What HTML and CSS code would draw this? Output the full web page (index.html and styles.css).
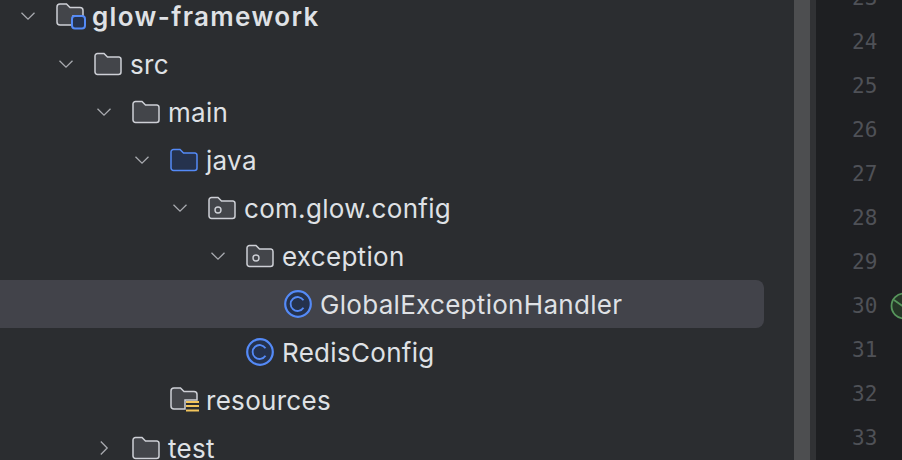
FILE: index.html
```html
<!DOCTYPE html>
<html lang="en">
<head>
  <meta charset="UTF-8">
  <title>glow-framework</title>
  <link rel="stylesheet" href="styles.css">
</head>
<body>
  <svg class="defs" width="0" height="0">
    <symbol id="chevron-down" viewBox="0 0 16 16"><path d="M1.500 4.800 8 11.200l6.500-6.400" fill="none" stroke="#a9abb0" stroke-width="1.300"/></symbol>
    <symbol id="chevron-right" viewBox="0 0 16 16"><path d="M4.800 1.500 11.200 8l-6.400 6.500" fill="none" stroke="#a9abb0" stroke-width="1.300"/></symbol>
    <symbol id="folder" viewBox="0 0 28 24"><path d="M1 4a2.500 2.500 0 0 1 2.500-2.500h6.500l3.500 3.500h11.500A2.500 2.500 0 0 1 27 7.500V20a2.500 2.500 0 0 1-2.500 2.500h-21A2.500 2.500 0 0 1 1 20z" fill="#43454a" stroke="#ced0d6" stroke-width="1.500"/></symbol>
    <symbol id="package" viewBox="0 0 28 24"><path d="M1 4a2.500 2.500 0 0 1 2.500-2.500h6.500l3.500 3.500h11.500A2.500 2.500 0 0 1 27 7.500V20a2.500 2.500 0 0 1-2.500 2.500h-21A2.500 2.500 0 0 1 1 20z" fill="#43454a" stroke="#ced0d6" stroke-width="1.500"/><circle cx="10" cy="14" r="3" fill="none" stroke="#ced0d6" stroke-width="1.400"/></symbol>
    <symbol id="class" viewBox="0 0 28 28"><circle cx="14" cy="14" r="12.800" fill="#25324d" stroke="#548af7" stroke-width="2.200"/><path d="M19.500 10.200A7 7 0 1 0 19.500 17.800" fill="none" stroke="#548af7" stroke-width="1.800"/></symbol>
  </svg>

  <div class="window">
    <div class="tree">
      <div class="row level-0">
        <svg class="chevron"><use href="#chevron-down"/></svg>
        <svg class="icon wide" viewBox="0 0 30 28">
          <path d="M1 5a3 3 0 0 1 3-3h6.500l3.500 3.500h10a3 3 0 0 1 3 3V14H17v9H4a3 3 0 0 1-3-3z" fill="#43454a" stroke="#ced0d6" stroke-width="1.500"/>
          <rect x="16" y="14" width="13" height="12.500" rx="3" fill="#25324d" stroke="#548af7" stroke-width="2"/>
        </svg>
        <span class="label bold">glow-framework</span>
      </div>
      <div class="row level-1">
        <svg class="chevron"><use href="#chevron-down"/></svg>
        <svg class="icon"><use href="#folder"/></svg>
        <span class="label">src</span>
      </div>
      <div class="row level-2">
        <svg class="chevron"><use href="#chevron-down"/></svg>
        <svg class="icon"><use href="#folder"/></svg>
        <span class="label">main</span>
      </div>
      <div class="row level-3">
        <svg class="chevron"><use href="#chevron-down"/></svg>
        <svg class="icon" viewBox="0 0 28 24"><path d="M1 4a2.500 2.500 0 0 1 2.500-2.500h6.500l3.500 3.500h11.500A2.500 2.500 0 0 1 27 7.500V20a2.500 2.500 0 0 1-2.500 2.500h-21A2.500 2.500 0 0 1 1 20z" fill="#25324d" stroke="#548af7" stroke-width="1.500"/></svg>
        <span class="label">java</span>
      </div>
      <div class="row level-4">
        <svg class="chevron"><use href="#chevron-down"/></svg>
        <svg class="icon"><use href="#package"/></svg>
        <span class="label">com.glow.config</span>
      </div>
      <div class="row level-5">
        <svg class="chevron"><use href="#chevron-down"/></svg>
        <svg class="icon"><use href="#package"/></svg>
        <span class="label">exception</span>
      </div>
      <div class="row level-6 selected">
        <span class="chevron"></span>
        <svg class="icon round"><use href="#class"/></svg>
        <span class="label">GlobalExceptionHandler</span>
      </div>
      <div class="row level-5">
        <span class="chevron"></span>
        <svg class="icon round"><use href="#class"/></svg>
        <span class="label">RedisConfig</span>
      </div>
      <div class="row level-3">
        <span class="chevron"></span>
        <svg class="icon wide" viewBox="0 0 30 28">
          <path d="M1 5a3 3 0 0 1 3-3h6.500l3.500 3.500h10a3 3 0 0 1 3 3V14H15v9H4a3 3 0 0 1-3-3z" fill="#43454a" stroke="#ced0d6" stroke-width="1.500"/>
          <path d="M16 16h13M16 20h13M16 24.500h13" stroke="#f2c55c" stroke-width="2.200"/>
        </svg>
        <span class="label">resources</span>
      </div>
      <div class="row level-2">
        <svg class="chevron"><use href="#chevron-right"/></svg>
        <svg class="icon"><use href="#folder"/></svg>
        <span class="label">test</span>
      </div>
    </div>

    <div class="scrollbar"></div>
    <div class="divider"></div>

    <div class="gutter">
      <div class="line">23</div>
      <div class="line">24</div>
      <div class="line">25</div>
      <div class="line">26</div>
      <div class="line">27</div>
      <div class="line">28</div>
      <div class="line">29</div>
      <div class="line">
        30
        <svg class="run" viewBox="0 0 28 28">
          <circle cx="14" cy="14" r="12.500" fill="#253627" stroke="#57965c" stroke-width="1.800"/>
          <path d="M4 8l10 7 9-7" fill="none" stroke="#57965c" stroke-width="1.800"/>
        </svg>
      </div>
      <div class="line">31</div>
      <div class="line">32</div>
      <div class="line">33</div>
    </div>
  </div>
</body>
</html>
```

FILE: styles.css
```css
html, body {
  margin: 0;
  height: 100%;
  overflow: hidden;
  background: #1e1f22;
}
.defs {
  position: absolute;
}
.window {
  display: flex;
  height: 460px;
}
.tree {
  width: 794px;
  flex-shrink: 0;
  margin-top: -8px;
  background: #2b2d30;
  font-family: Inter, "Noto Sans", sans-serif;
  font-size: 26px;
  letter-spacing: 0.3px;
  color: #dfe1e5;
}
.row {
  display: flex;
  align-items: center;
  height: 48px;
  width: 764px;
  box-sizing: border-box;
  border-radius: 0 8px 8px 0;
}
.row.selected {
  background: #42434a;
}
.level-0 { padding-left: 20px; }
.level-1 { padding-left: 58px; }
.level-2 { padding-left: 96px; }
.level-3 { padding-left: 134px; }
.level-4 { padding-left: 172px; }
.level-5 { padding-left: 210px; }
.level-6 { padding-left: 248px; }
.chevron {
  display: block;
  width: 16px;
  height: 16px;
  margin-right: 20px;
  flex-shrink: 0;
}
.icon {
  width: 28px;
  height: 24px;
  margin-right: 8px;
  flex-shrink: 0;
}
.icon.wide {
  width: 30px;
  height: 28px;
  margin-right: 6px;
}
.icon.round {
  height: 28px;
}
.label {
  white-space: nowrap;
}
.bold {
  font-weight: 600;
  letter-spacing: 1.350px;
}
.scrollbar {
  width: 16px;
  background: #4d4e50;
}
.divider {
  width: 6px;
  background: #313235;
}
.gutter {
  flex: 1;
  margin-top: -24px;
  padding-left: 36px;
  background: #1e1f22;
  font-family: "DejaVu Sans Mono", monospace;
  font-size: 21px;
  color: #4f5157;
}
.line {
  display: flex;
  align-items: center;
  height: 44px;
  position: relative;
}
.run {
  position: absolute;
  left: 38px;
  top: 8px;
  width: 28px;
  height: 28px;
}
```
